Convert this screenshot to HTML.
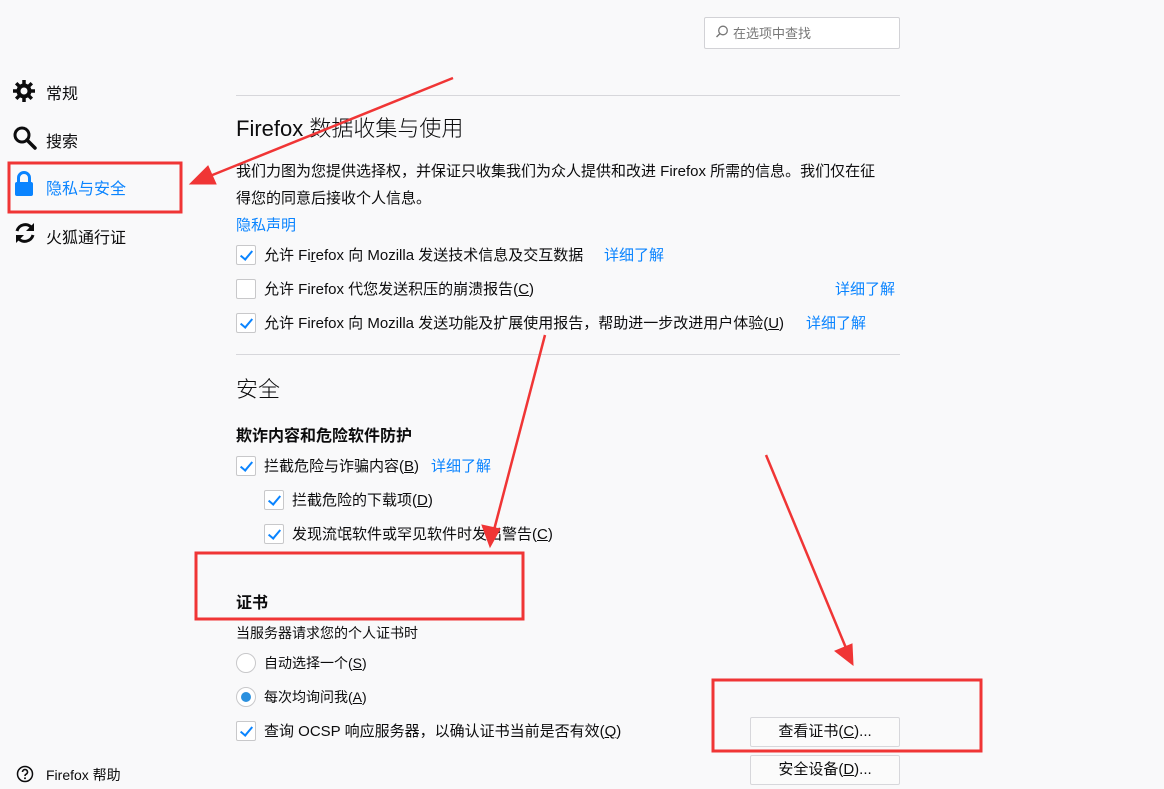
<!DOCTYPE html>
<html><head><meta charset="utf-8"><style>
*{margin:0;padding:0;box-sizing:border-box}
body{width:1164px;height:789px;background:#f9f9fa;font-family:"Liberation Sans","Noto Sans CJK SC",sans-serif;color:#0c0c0d;position:relative;overflow:hidden;font-size:15px}
.a{position:absolute;white-space:nowrap}
.nav{font-size:16px;left:46px}
.lnk{color:#0a84ff}
.cb{position:absolute;width:20px;height:20px;border:1px solid #c8c8ca;border-radius:2px;background:#fff}
.cb.c::after{content:"";position:absolute;left:6px;top:2px;width:5px;height:10px;border:solid #0a84ff;border-width:0 2px 2px 0;transform:rotate(40deg)}
.rd{position:absolute;width:20px;height:20px;border:1px solid #c8c8ca;border-radius:50%;background:#fff}
.rd.c::after{content:"";position:absolute;left:4px;top:4px;width:10px;height:10px;border-radius:50%;background:#2a90df}
.hr{position:absolute;left:236px;width:664px;height:1px;background:#d7d7db}
.btn{position:absolute;left:750px;width:150px;height:30px;border:1px solid #d7d7db;border-radius:2px;background:#fbfbfb;text-align:center;line-height:28px;font-size:15px}
u{text-decoration:underline}
</style></head><body>
<div class="a" style="left:704px;top:17px;width:196px;height:32px;border:1px solid #d2d2d6;border-radius:2px;background:#fff"></div>
<svg class="a" style="left:714px;top:24px" width="16" height="16" viewBox="0 0 16 16"><circle cx="9" cy="6.5" r="4.3" fill="none" stroke="#777" stroke-width="1.3"/><path d="M6 9.5L2.5 13" stroke="#777" stroke-width="1.4"/></svg>
<div class="a" style="left:733px;top:23px;font-size:13px;color:#777">在选项中查找</div>

<svg class="a" style="left:12px;top:79px" width="24" height="24" viewBox="0 0 24 24"><circle cx="12" cy="12" r="5.5" fill="none" stroke="#0c0c0d" stroke-width="4"/><g stroke="#0c0c0d" stroke-width="3.5"><path d="M12 1v5M12 18v5M1 12h5M18 12h5M4.2 4.2l3.5 3.5M16.3 16.3l3.5 3.5M4.2 19.8l3.5-3.5M16.3 7.7l3.5-3.5"/></g></svg>
<div class="a nav" style="top:80px">常规</div>
<svg class="a" style="left:12px;top:125px" width="26" height="26" viewBox="0 0 26 26"><circle cx="10" cy="10" r="7" fill="none" stroke="#0c0c0d" stroke-width="3"/><path d="M15 15l8 8" stroke="#0c0c0d" stroke-width="3.5" stroke-linecap="round"/></svg>
<div class="a nav" style="top:128px">搜索</div>
<svg class="a" style="left:14px;top:171px" width="20" height="26" viewBox="0 0 20 26"><path d="M4.5 11V7a5.5 5.5 0 0 1 11 0v4" fill="none" stroke="#0a84ff" stroke-width="3"/><rect x="1" y="11" width="18" height="14" rx="2" fill="#0a84ff"/></svg>
<div class="a nav lnk" style="top:175px">隐私与安全</div>
<svg class="a" style="left:13px;top:221px" width="24" height="24" viewBox="0 0 24 24"><path d="M4 10a8.5 8.5 0 0 1 15-3" fill="none" stroke="#0c0c0d" stroke-width="3"/><path d="M21 2v8h-8z" fill="#0c0c0d"/><path d="M20 14a8.5 8.5 0 0 1-15 3" fill="none" stroke="#0c0c0d" stroke-width="3"/><path d="M3 22v-8h8z" fill="#0c0c0d"/></svg>
<div class="a nav" style="top:224px">火狐通行证</div>
<svg class="a" style="left:16px;top:765px" width="18" height="18" viewBox="0 0 18 18"><circle cx="9" cy="9" r="7.5" fill="none" stroke="#0c0c0d" stroke-width="1.5"/><path d="M6.5 7a2.5 2.5 0 1 1 3.5 2.3c-.8.4-1 .9-1 1.7" fill="none" stroke="#0c0c0d" stroke-width="1.6"/><circle cx="9" cy="13.3" r="1" fill="#0c0c0d"/></svg>
<div class="a" style="left:46px;top:765px;font-size:14px">Firefox 帮助</div>

<div class="hr" style="top:95px"></div>
<div class="a" style="left:236px;top:111px;font-size:22px;font-weight:300">Firefox 数据收集与使用</div>
<div class="a" style="left:236px;top:158px;line-height:27px">我们力图为您提供选择权，并保证只收集我们为众人提供和改进 Firefox 所需的信息。我们仅在征<br>得您的同意后接收个人信息。</div>
<div class="a lnk" style="left:236px;top:214px">隐私声明</div>
<div class="cb c" style="left:236px;top:245px"></div>
<div class="a" style="left:264px;top:244px">允许 Fi<u>r</u>efox 向 Mozilla 发送技术信息及交互数据</div>
<div class="a lnk" style="left:604px;top:244px">详细了解</div>
<div class="cb" style="left:236px;top:279px"></div>
<div class="a" style="left:264px;top:278px">允许 Firefox 代您发送积压的崩溃报告(<u>C</u>)</div>
<div class="a lnk" style="left:835px;top:278px">详细了解</div>
<div class="cb c" style="left:236px;top:313px"></div>
<div class="a" style="left:264px;top:312px">允许 Firefox 向 Mozilla 发送功能及扩展使用报告，帮助进一步改进用户体验(<u>U</u>)</div>
<div class="a lnk" style="left:806px;top:312px">详细了解</div>

<div class="hr" style="top:354px"></div>
<div class="a" style="left:236px;top:372px;font-size:22px;font-weight:300">安全</div>
<div class="a" style="left:236px;top:422px;font-size:16px;font-weight:bold">欺诈内容和危险软件防护</div>
<div class="cb c" style="left:236px;top:456px"></div>
<div class="a" style="left:264px;top:455px">拦截危险与诈骗内容(<u>B</u>)</div>
<div class="a lnk" style="left:431px;top:455px">详细了解</div>
<div class="cb c" style="left:264px;top:490px"></div>
<div class="a" style="left:292px;top:489px">拦截危险的下载项(<u>D</u>)</div>
<div class="cb c" style="left:264px;top:524px"></div>
<div class="a" style="left:292px;top:523px">发现流氓软件或罕见软件时发出警告(<u>C</u>)</div>

<div class="a" style="left:236px;top:589px;font-size:16px;font-weight:bold">证书</div>
<div class="a" style="left:236px;top:623px;font-size:14px">当服务器请求您的个人证书时</div>
<div class="rd" style="left:236px;top:653px"></div>
<div class="a" style="left:264px;top:653px;font-size:14px">自动选择一个(<u>S</u>)</div>
<div class="rd c" style="left:236px;top:687px"></div>
<div class="a" style="left:264px;top:687px;font-size:14px">每次均询问我(<u>A</u>)</div>
<div class="cb c" style="left:236px;top:721px"></div>
<div class="a" style="left:264px;top:720px">查询 OCSP 响应服务器，以确认证书当前是否有效(<u>Q</u>)</div>
<div class="btn" style="top:717px">查看证书(<u>C</u>)...</div>
<div class="btn" style="top:755px">安全设备(<u>D</u>)...</div>

<svg class="a" style="left:0;top:0" width="1164" height="789">
<g fill="none" stroke="#f03535" stroke-width="3">
<rect x="9" y="163" width="172" height="49"/>
<rect x="196" y="553" width="327" height="66"/>
<rect x="713" y="680" width="268" height="71"/>
</g>
<g stroke="#f03535" stroke-width="2.5" fill="#f03535">
<path d="M453 78L205 178"/><path d="M190 184l18-18 8 18z" stroke-width="1"/>
<path d="M545 335L494 530"/><path d="M490 547l-8-22 18 4z" stroke-width="1"/>
<path d="M766 455L846 648"/><path d="M853 665l-18-14 17-7z" stroke-width="1"/>
</g>
</svg>
</body></html>
